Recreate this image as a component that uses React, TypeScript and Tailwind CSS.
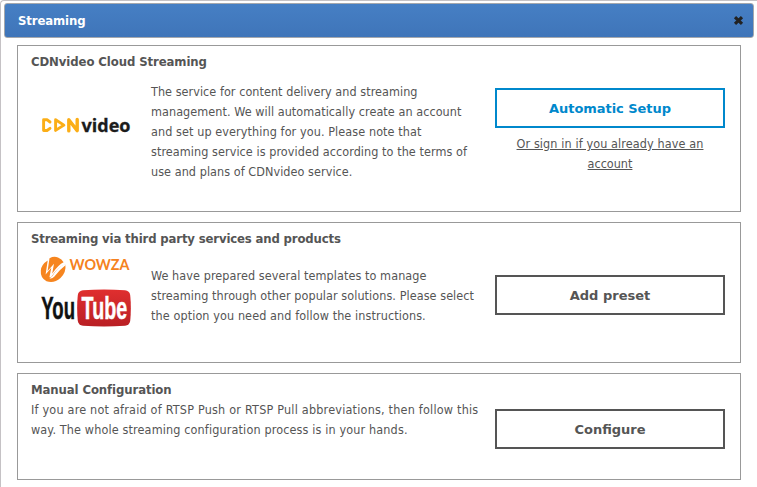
import type { ReactNode } from 'react';

const BODY = "font-['DejaVu_Sans_Condensed','DejaVu_Sans',sans-serif]";

function Panel({ title, tracking, className, children }: { title: string; tracking: string; className: string; children: ReactNode }) {
  return (
    <section className={`w-[724px] border border-[#999] pl-[13px] pr-[15px] ${className}`}>
      <h2 className={`h-5 pt-[6px] text-[13px] font-bold leading-5 whitespace-nowrap ${tracking}`}>{title}</h2>
      {children}
    </section>
  );
}

function Button({ label, className }: { label: string; className: string }) {
  return (
    <button
      className={`block h-10 w-[230px] border-2 pt-[2px] font-['DejaVu_Sans',sans-serif] text-[13px] font-bold ${className}`}
    >
      {label}
    </button>
  );
}

function Lines({ lines }: { lines: [string, string][] }) {
  return (
    <>
      {lines.map(([text, tracking]) => (
        <div key={text} className={`h-5 whitespace-nowrap ${tracking}`}>
          {text}
        </div>
      ))}
    </>
  );
}

function CdnLogo() {
  return (
    <svg width="100" height="24" viewBox="0 0 100 24" className="block overflow-visible">
      <g fill="none" stroke="#fbae17" strokeWidth="2.9" strokeLinejoin="round" strokeLinecap="round">
        <path d="M9 7 L6 4.7 H2.6 V15.5 H6 L9 13.3" />
        <path d="M14.6 4.8 L22.9 10.1 L14.6 15.4 Z" />
        <path d="M27.8 15.9 V4.7 L36.2 15.6 V4.5" strokeWidth="3.4" />
      </g>
      <text x="40.5" y="16.6" textLength="49" lengthAdjust="spacingAndGlyphs" fill="#1c1c1c" stroke="#1c1c1c" strokeWidth=".3" fontFamily="Open Sans" fontWeight="700" fontSize="18.5">
        video
      </text>
    </svg>
  );
}

function WowzaLogo() {
  return (
    <svg width="100" height="28" viewBox="0 0 100 28" className="block overflow-visible">
      <g fill="#f6851f">
        <path d="M9.5 2.3 Q14 -.2 18 1.6 Q22 3.2 23.6 6.3 Q18.5 8.7 12.2 17.5 L14 7.8 L7.6 15 Z" />
        <path d="M7.7 4.6 L5.6 18.4 L11.3 11.8 L9.4 21.2 L11.3 21 Q17.5 11 25.3 8.2 Q26.6 16 20.5 21.9 Q14 27.8 6.5 25.2 Q.2 22 .8 14.5 Q1.4 8.5 7.7 4.6Z" />
      </g>
      <path d="M12 20.5 Q17.5 11 25.6 7.4 L25.8 8.9 Q19.5 13.5 14.2 20.8 Q12 23.3 9.5 22.3Z" fill="#fff" />
      <text x="29.5" y="14" textLength="60" lengthAdjust="spacingAndGlyphs" fill="#f58220" fontFamily="Lato" fontWeight="700" fontSize="16">
        WOWZA
      </text>
    </svg>
  );
}

function YouTubeLogo() {
  return (
    <svg width="92" height="38" viewBox="0 0 92 38" className="block">
      <defs>
        <linearGradient id="tube" x2="0" y2="1">
          <stop stopColor="#e02f2f" />
          <stop offset="1" stopColor="#b91f24" />
        </linearGradient>
      </defs>
      <path d="M43 1.3 Q64 -.3 85 1.3 Q89.5 1.8 90.2 6 Q91.5 19 90.2 32 Q89.5 36.2 85 36.7 Q64 38.3 43 36.7 Q38.5 36.2 37.8 32 Q36.5 19 37.8 6 Q38.5 1.8 43 1.3Z" fill="url(#tube)" />
      <g transform="scale(.66 1)" fontFamily="Liberation Sans Narrow, Liberation Sans" fontWeight="700" fontSize="32" strokeWidth=".5">
        <text x="2" y="29.6" textLength="51" lengthAdjust="spacingAndGlyphs" fill="#111" stroke="#111">You</text>
        <text x="63" y="29.6" textLength="69" lengthAdjust="spacingAndGlyphs" fill="#fff" stroke="#fff">Tube</text>
      </g>
    </svg>
  );
}

export default function App() {
  return (
    <div className={`h-[487px] w-[757px] overflow-hidden rounded-tl-[4px] border-l border-t border-[#c5c2c5] bg-white pl-[3px] pt-[2px] text-[12.5px] leading-5 text-[#555] ${BODY}`}>
      <header className="flex h-[35px] w-[750px] items-center justify-between rounded-[3px] border border-[#a5a8ad] bg-gradient-to-b from-[#467fc4] to-[#3f75b9] pl-[13px] pr-[9px]">
        <h1 className="pt-[1px] text-[13px] font-bold tracking-[-0.12px] text-white">Streaming</h1>
        <svg width="11" height="11" viewBox="0 0 11 11">
          <path d="M2 2.2 L9 8.8 M9 2.2 L2 8.8" stroke="#222" strokeWidth="3.2" />
        </svg>
      </header>
      <main className="flex flex-col gap-[10px] pl-[13px] pt-[7px]">
        <Panel title="CDNvideo Cloud Streaming" tracking="tracking-[-0.09px]" className="h-[167px]">
          <div className="flex justify-between">
            <div className="flex">
              <div className="w-[120px] pl-[10px] pt-[49px]"><CdnLogo /></div>
              <div className="pt-[16px]">
                <Lines
                  lines={[
                    ['The service for content delivery and streaming', 'tracking-[0.05px]'],
                    ['management. We will automatically create an account', 'tracking-[0.06px]'],
                    ['and set up everything for you. Please note that', 'tracking-[0.09px]'],
                    ['streaming service is provided according to the terms of', 'tracking-[0.07px]'],
                    ['use and plans of CDNvideo service.', 'tracking-[0.06px]'],
                  ]}
                />
              </div>
            </div>
            <div className="w-[230px] pt-[22px] text-center">
              <Button label="Automatic Setup" className="border-[#08c] tracking-[-0.05px] text-[#08c]" />
              <a className="block pt-[6px] underline">
                <Lines lines={[['Or sign in if you already have an', 'tracking-[0.11px]'], ['account', '']]} />
              </a>
            </div>
          </div>
        </Panel>
        <Panel title="Streaming via third party services and products" tracking="tracking-[-0.15px]" className="h-[141px]">
          <div className="flex justify-between">
            <div className="flex">
              <div className="w-[120px] pl-[9px] pt-[13px]">
                <WowzaLogo />
                <div className="pt-[5px]"><YouTubeLogo /></div>
              </div>
              <div className="pt-[23px]">
                <Lines
                  lines={[
                    ['We have prepared several templates to manage', 'tracking-[0.08px]'],
                    ['streaming through other popular solutions. Please select', 'tracking-[0.07px]'],
                    ['the option you need and follow the instructions.', 'tracking-[0.1px]'],
                  ]}
                />
              </div>
            </div>
            <div className="pt-[32px]"><Button label="Add preset" className="border-[#555]" /></div>
          </div>
        </Panel>
        <Panel title="Manual Configuration" tracking="tracking-[-0.1px]" className="h-[107px]">
          <div className="flex justify-between">
            <div className="pt-[6px]">
              <Lines
                lines={[
                  ['If you are not afraid of RTSP Push or RTSP Pull abbreviations, then follow this', 'tracking-[0.21px]'],
                  ['way. The whole streaming configuration process is in your hands.', 'tracking-[0.14px]'],
                ]}
              />
            </div>
            <div className="pt-[15px]"><Button label="Configure" className="border-[#555]" /></div>
          </div>
        </Panel>
      </main>
    </div>
  );
}
